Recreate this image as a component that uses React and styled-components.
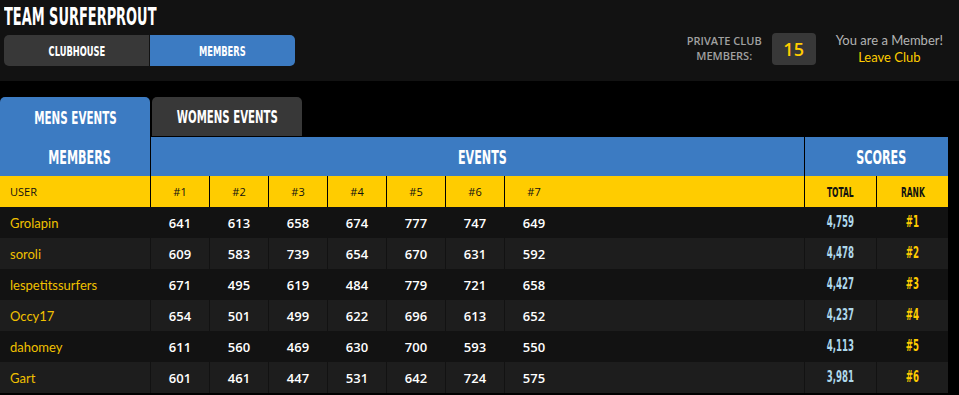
import React from "react";
import styled, { createGlobalStyle } from "styled-components";

const GlobalStyle = createGlobalStyle`
  html, body { margin: 0; padding: 0; background: #000; }
  body { font-family: "Lato", "Open Sans", sans-serif; color: #fff; }
  * { box-sizing: border-box; }
`;

const BLUE = "#3c7bc2";
const GRAY = "#383838";
const YELLOW = "#ffcc00";

const Page = styled.div`
  width: 959px;
  min-height: 395px;
  background: #000;
`;

const TopBar = styled.header`
  height: 81px;
  background: #121212;
  display: flex;
  justify-content: space-between;
  align-items: flex-start;
  padding: 5px 16px 0 4px;
`;

const LeftCol = styled.div`
  display: flex;
  flex-direction: column;
  gap: 6px;
`;

const Condensed = styled.span`
  display: inline-block;
  font-family: "DejaVu Sans Condensed", "DejaVu Sans", sans-serif;
  font-weight: bold;
  white-space: nowrap;
  font-size: ${(p) => p.$size || 14}px;
  line-height: ${(p) => p.$size || 14}px;
  color: ${(p) => p.$color || "#fff"};
  transform: scaleX(${(p) => p.$sx || 0.62});
  transform-origin: ${(p) => p.$origin || "center"};
`;

const TitleLine = styled.h1`
  margin: 0;
  height: 24px;
  display: flex;
`;

const SegGroup = styled.div`
  display: flex;
  gap: 1px;
`;

const SegButton = styled.div`
  width: 145px;
  height: 31px;
  display: flex;
  align-items: center;
  justify-content: center;
  background: ${(p) => (p.$active ? BLUE : GRAY)};
  border-radius: ${(p) => (p.$first ? "5px 0 0 5px" : "0 5px 5px 0")};
`;

const RightInfo = styled.div`
  display: flex;
  align-items: center;
  margin-top: 27px;
`;

const CountLabel = styled.div`
  font-family: "Open Sans", sans-serif;
  font-size: 11px;
  font-weight: 600;
  line-height: 15px;
  color: #a0a0a0;
  text-align: center;
  text-transform: uppercase;
  padding-bottom: 3px;
  margin-right: 10px;
`;

const CountBox = styled.div`
  width: 44px;
  height: 32px;
  border-radius: 4px;
  background: ${GRAY};
  color: ${YELLOW};
  font-family: "Open Sans", sans-serif;
  font-size: 18px;
  font-weight: 600;
  display: flex;
  align-items: center;
  justify-content: center;
  margin-right: 20px;
`;

const MemberInfo = styled.div`
  font-size: 13px;
  line-height: 17px;
  text-align: center;
  color: #b4b4b4;
`;

const LeaveLink = styled.div`
  color: ${YELLOW};
`;

const Board = styled.section`
  margin-top: 16px;
  width: 948px;
`;

const TabsRow = styled.div`
  display: flex;
  gap: 2px;
  height: 40px;
  align-items: flex-start;
`;

const Tab = styled.div`
  width: 150px;
  height: ${(p) => (p.$active ? 40 : 39)}px;
  border-radius: 5px 5px 0 0;
  background: ${(p) => (p.$active ? BLUE : GRAY)};
  display: flex;
  align-items: center;
  justify-content: center;
  padding-top: 1px;
`;

const COLS = "150px repeat(7, 59px) 241px 72px 72px";

const Row = styled.div`
  display: grid;
  grid-template-columns: ${(p) => p.$cols || COLS};
  height: ${(p) => p.$h || 31}px;
  background: ${(p) => p.$bg};
`;

const Cell = styled.div`
  display: flex;
  align-items: center;
  justify-content: ${(p) => (p.$left ? "flex-start" : "center")};
  padding-left: ${(p) => (p.$left ? 10 : p.$pad || 0)}px;
  border-left: ${(p) => (p.$div ? `1px solid ${p.$div}` : "none")};
  white-space: nowrap;
`;

const HeadLabel = styled.span`
  font-family: "Open Sans", sans-serif;
  font-size: 11px;
  color: #111;
`;

const UserName = styled.span`
  font-size: 13px;
  color: #f0c000;
`;

const Score = styled.span`
  font-family: "Open Sans", sans-serif;
  font-size: 13px;
  font-weight: 600;
  color: #fff;
`;

const rows = [
  { user: "Grolapin", s: [641, 613, 658, 674, 777, 747, 649], total: "4,759", rank: "#1" },
  { user: "soroli", s: [609, 583, 739, 654, 670, 631, 592], total: "4,478", rank: "#2" },
  { user: "lespetitssurfers", s: [671, 495, 619, 484, 779, 721, 658], total: "4,427", rank: "#3" },
  { user: "Occy17", s: [654, 501, 499, 622, 696, 613, 652], total: "4,237", rank: "#4" },
  { user: "dahomey", s: [611, 560, 469, 630, 700, 593, 550], total: "4,113", rank: "#5" },
  { user: "Gart", s: [601, 461, 447, 531, 642, 724, 575], total: "3,981", rank: "#6" },
];

export default function App() {
  return (
    <Page>
      <GlobalStyle />
      <TopBar>
        <LeftCol>
          <TitleLine>
            <Condensed $size={24} $sx={0.6} $origin="left">TEAM SURFERPROUT</Condensed>
          </TitleLine>
          <SegGroup>
            <SegButton $first>
              <Condensed $size={14} $sx={0.66}>CLUBHOUSE</Condensed>
            </SegButton>
            <SegButton $active>
              <Condensed $size={14} $sx={0.66}>MEMBERS</Condensed>
            </SegButton>
          </SegGroup>
        </LeftCol>
        <RightInfo>
          <CountLabel>
            Private Club
            <br />
            Members:
          </CountLabel>
          <CountBox>15</CountBox>
          <MemberInfo>
            You are a Member!
            <LeaveLink>Leave Club</LeaveLink>
          </MemberInfo>
        </RightInfo>
      </TopBar>

      <Board>
        <TabsRow>
          <Tab $active>
            <Condensed $size={18} $sx={0.64}>MENS EVENTS</Condensed>
          </Tab>
          <Tab>
            <Condensed $size={18} $sx={0.63}>WOMENS EVENTS</Condensed>
          </Tab>
        </TabsRow>

        <Row $cols="150px 654px 144px" $h={39} $bg={BLUE}>
          <Cell $pad={9}>
            <Condensed $size={20} $sx={0.62}>MEMBERS</Condensed>
          </Cell>
          <Cell $div="#000" $pad={9}>
            <Condensed $size={20} $sx={0.62}>EVENTS</Condensed>
          </Cell>
          <Cell $div="#000" $pad={9}>
            <Condensed $size={20} $sx={0.62}>SCORES</Condensed>
          </Cell>
        </Row>

        <Row $bg={YELLOW}>
          <Cell $left>
            <HeadLabel>USER</HeadLabel>
          </Cell>
          {[1, 2, 3, 4, 5, 6, 7].map((n) => (
            <Cell key={n} $div="#000">
              <HeadLabel>#{n}</HeadLabel>
            </Cell>
          ))}
          <Cell />
          <Cell $div="#000">
            <Condensed $size={14} $sx={0.6} $color="#111">TOTAL</Condensed>
          </Cell>
          <Cell $div="#000">
            <Condensed $size={14} $sx={0.6} $color="#111">RANK</Condensed>
          </Cell>
        </Row>

        {rows.map((r, i) => (
          <Row key={r.user} $bg={i % 2 === 0 ? "#121212" : "#1d1d1d"}>
            <Cell $left>
              <UserName>{r.user}</UserName>
            </Cell>
            {r.s.map((v, j) => (
              <Cell key={j} $div="#121212">
                <Score>{v}</Score>
              </Cell>
            ))}
            <Cell />
            <Cell $div="#121212">
              <Condensed $size={15} $sx={0.64} $color="#aed8ea">{r.total}</Condensed>
            </Cell>
            <Cell $div="#121212">
              <Condensed $size={15} $sx={0.64} $color={YELLOW}>{r.rank}</Condensed>
            </Cell>
          </Row>
        ))}
      </Board>
    </Page>
  );
}
